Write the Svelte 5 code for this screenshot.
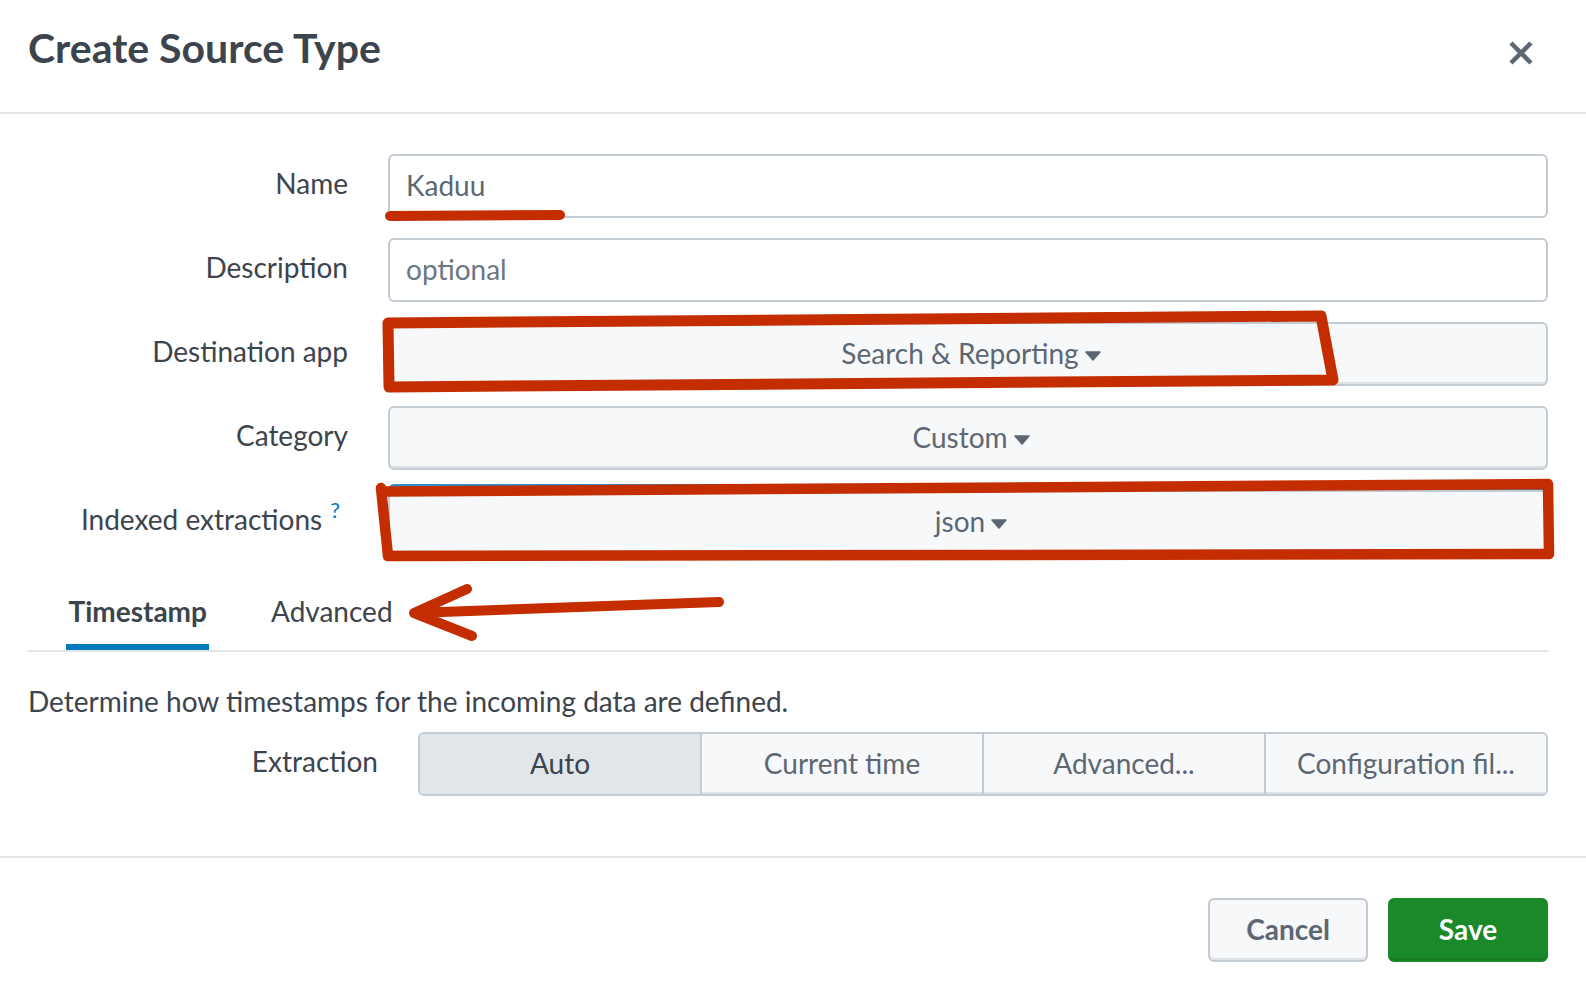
<script>
  const segments = ['Auto', 'Current time', 'Advanced...', 'Configuration fil...'];
  const selects = [
    { label: 'Destination app', value: 'Search & Reporting' },
    { label: 'Category', value: 'Custom' }
  ];
</script>

{#snippet caret()}
  <svg class="caret" width="16" height="10" viewBox="0 0 16 10" aria-hidden="true">
    <path d="M1 1H15L8 9Z" fill="#5c6773" stroke="#5c6773" stroke-width="1.5" stroke-linejoin="round" />
  </svg>
{/snippet}

<div class="modal">
  <header class="head">
    <h1>Create Source Type</h1>
    <svg class="close" width="24" height="24" viewBox="0 0 24 24" aria-hidden="true">
      <path d="M2 2L22 22M22 2L2 22" stroke="#5c6773" stroke-width="4.5" fill="none" />
    </svg>
  </header>

  <section class="body">
    <div class="row">
      <div class="label">Name</div>
      <div class="input value">Kaduu</div>
    </div>
    <div class="row">
      <div class="label">Description</div>
      <div class="input placeholder">optional</div>
    </div>
    {#each selects as s}
      <div class="row">
        <div class="label">{s.label}</div>
        <div class="select">{s.value}{@render caret()}</div>
      </div>
    {/each}
    <div class="row last">
      <div class="label">Indexed extractions<sup class="help">?</sup></div>
      <div class="select focused">json{@render caret()}</div>
    </div>

    <nav class="tabs">
      <div class="tab active">Timestamp</div>
      <div class="tab">Advanced</div>
    </nav>

    <p class="desc">Determine how timestamps for the incoming data are defined.</p>

    <div class="row extraction">
      <div class="label">Extraction</div>
      <div class="group">
        {#each segments as seg, i}
          <div class="seg" class:on={i === 0}>{seg}</div>
        {/each}
      </div>
    </div>
  </section>

  <footer class="foot">
    <button class="btn">Cancel</button>
    <button class="btn primary">Save</button>
  </footer>

  <!-- red marker scribbles drawn on top of the screenshot -->
  <svg class="marks" width="1586" height="988" viewBox="0 0 1586 988" aria-hidden="true">
    <g fill="none" stroke="#c42d00" stroke-linecap="round" stroke-linejoin="round">
      <path stroke-width="10" d="M390 216L560 215" />
      <path stroke-width="11" d="M388 323L1321 316L1333 380L389 387Z" />
      <path stroke-width="10.5" d="M381 488L388 556L1549 554L1548 484L385 491.5" />
      <path stroke-width="10" d="M719 602L414 613M467 589L414 613L472 636" />
    </g>
  </svg>
</div>

<style>
  :global(body) {
    margin: 0;
    background: #fff;
  }

  .modal {
    position: relative;
    width: 1586px;
    height: 988px;
    overflow: hidden;
    font-family: Lato, "Liberation Sans", sans-serif;
    font-size: 28px;
    color: #3c444d;
  }

  .head {
    height: 112px;
    border-bottom: 2px solid #e1e6eb;
    display: flex;
    align-items: center;
    justify-content: space-between;
    padding: 0 53px 0 28px;
  }

  h1 {
    margin: 0 0 18px;
    font-size: 41px;
    font-weight: 700;
  }

  .close {
    margin-bottom: 7px;
  }

  .body {
    padding: 40px 38px 0 28px;
    border-bottom: 2px solid #e1e6eb;
    height: 744px;
    box-sizing: border-box;
  }

  .row {
    display: flex;
    align-items: flex-start;
    height: 64px;
    margin-bottom: 20px;
  }

  .row.last {
    margin-bottom: 0;
  }

  .label {
    width: 320px;
    text-align: right;
    line-height: 58px;
    flex-shrink: 0;
    margin-right: 40px;
  }

  .help {
    font-size: 22px;
    color: #007abd;
    margin-left: 8px;
    margin-right: 8px;
    line-height: 0;
    position: relative;
    top: -2px;
    vertical-align: super;
  }

  .input,
  .select {
    flex: 1;
    height: 64px;
    box-sizing: border-box;
    border: 2px solid #c3cbd4;
    border-radius: 6px;
    line-height: 58px;
    color: #5c6773;
  }

  .input {
    padding: 0 16px;
    background: #fff;
  }

  .placeholder {
    color: #6b7785;
  }

  .select {
    padding-left: 6px;
    text-align: center;
    background: #f7f8fa;
    box-shadow: inset 0 -2px 0 #dde1e6;
  }

  .select.focused {
    box-shadow: inset 0 -2px 0 #dde1e6, 0 -6px 0 #2f8fc9;
  }

  .caret {
    margin-left: 6px;
    vertical-align: 3px;
  }

  .tabs {
    display: flex;
    gap: 59px;
    height: 98px;
    box-sizing: border-box;
    padding-left: 38px;
    border-bottom: 2px solid #e1e6eb;
    align-items: flex-end;
  }

  .tab {
    padding: 0 2.5px;
    height: 56px;
    line-height: 46px;
    border-bottom: 6px solid transparent;
  }

  .tab.active {
    font-weight: 700;
    border-bottom-color: #007abd;
  }

  .desc {
    margin: 31px 0 13px;
    line-height: 36px;
  }

  .extraction .label {
    width: 350px;
  }

  .extraction {
    margin-bottom: 0;
  }

  .group {
    flex: 1;
    display: flex;
    height: 64px;
    box-sizing: border-box;
    border: 2px solid #c3cbd4;
    border-radius: 6px;
    overflow: hidden;
    background: #f7f8fa;
  }

  .seg {
    flex: 1;
    text-align: center;
    line-height: 58px;
    color: #5c6773;
    border-left: 2px solid #c3cbd4;
    box-shadow: inset 0 -2px 0 #dde1e6;
  }

  .seg:first-child {
    border-left: 0;
  }

  .seg.on {
    background: #e1e6eb;
    color: #3c444d;
    box-shadow: none;
  }

  .foot {
    display: flex;
    justify-content: flex-end;
    gap: 20px;
    padding: 40px 38px 0 0;
  }

  .btn {
    width: 160px;
    height: 64px;
    box-sizing: border-box;
    border: 2px solid #c3cbd4;
    border-radius: 6px;
    box-shadow: inset 0 -2px 0 #dde1e6;
    background: #f7f8fa;
    color: #5c6773;
    font: 700 28px Lato, "Liberation Sans", sans-serif;
    padding: 0 0 2px;
  }

  .btn.primary {
    background: #1a8929;
    border-color: #1a8929;
    box-shadow: inset 0 -2px 0 #187a25;
    color: #fff;
  }

  .marks {
    position: absolute;
    left: 0;
    top: 0;
    pointer-events: none;
  }
</style>
